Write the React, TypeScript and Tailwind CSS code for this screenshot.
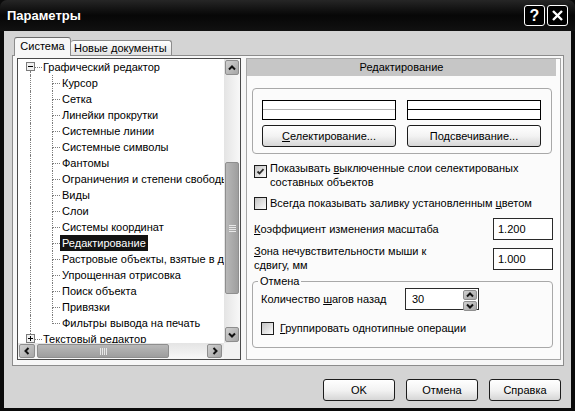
import React from "react";

type Dir = "up" | "down" | "left" | "right";

const chevronPaths: Record<Dir, string> = {
  up: "M1 5.5 L4 2.5 L7 5.5",
  down: "M1 2.5 L4 5.5 L7 2.5",
  left: "M5.5 1 L2.5 4 L5.5 7",
  right: "M2.5 1 L5.5 4 L2.5 7",
};

function Chevron({ dir }: { dir: Dir }) {
  return (
    <svg width="8" height="8" viewBox="0 0 8 8">
      <path d={chevronPaths[dir]} fill="none" stroke="#111" strokeWidth="2" />
    </svg>
  );
}

function ScrollButton({ dir, className }: { dir: Dir; className?: string }) {
  return (
    <div
      className={`flex shrink-0 items-center justify-center rounded-[2px] border border-[#8e8e8e] bg-gradient-to-br from-[#d0d0d0] to-[#a6a6a6] ${className ?? ""}`}
    >
      <Chevron dir={dir} />
    </div>
  );
}

function Grip({ vertical }: { vertical?: boolean }) {
  return vertical ? (
    <svg width="7" height="8" viewBox="0 0 7 8">
      <path d="M0 1.5h7M0 3.5h7M0 5.5h7M0 7.5h7" stroke="#e8e8e8" strokeWidth="1" />
    </svg>
  ) : (
    <svg width="8" height="7" viewBox="0 0 8 7">
      <path d="M1.5 0v7M3.5 0v7M5.5 0v7M7.5 0v7" stroke="#e8e8e8" strokeWidth="1" />
    </svg>
  );
}

function ExpandBox({ open }: { open: boolean }) {
  return (
    <svg width="9" height="9" viewBox="0 0 9 9" className="shrink-0">
      <rect x="0.5" y="0.5" width="8" height="8" fill="#f0f0f0" stroke="#7c7c7c" />
      <path d="M2 4.5h5" stroke="#000" />
      {!open && <path d="M4.5 2v5" stroke="#000" />}
    </svg>
  );
}

function Check({ checked }: { checked?: boolean }) {
  return (
    <span className="flex h-[13px] w-[13px] shrink-0 items-center justify-center border border-[#1c1c1c] bg-gradient-to-br from-[#c4c4c4] to-[#fbfbfb]">
      {checked && (
        <svg width="9" height="9" viewBox="0 0 9 9">
          <path d="M1.5 4.5 L3.5 6.5 L7.5 2.2" fill="none" stroke="#2a2a2a" strokeWidth="1.8" />
        </svg>
      )}
    </span>
  );
}

function Btn({ children, className }: { children: React.ReactNode; className?: string }) {
  return (
    <div
      className={`flex items-center justify-center rounded-[3px] border border-[#1c1c1c] bg-gradient-to-b from-white via-[#f3f3f3] to-[#d6d6d6] ${className ?? ""}`}
    >
      {children}
    </div>
  );
}

function ColorField({ dark }: { dark?: boolean }) {
  return (
    <div className="flex h-[20px] w-[134px] flex-col border border-black bg-white">
      <div className={dark ? "h-[9px] border-b border-black" : "h-[9px] border-b border-[#b4b4b4]"} />
    </div>
  );
}

function TitleButton({ children }: { children: React.ReactNode }) {
  return (
    <div className="flex h-[21px] w-[21px] items-center justify-center rounded-[3px] border border-white bg-black text-white">
      {children}
    </div>
  );
}

const children = [
  "Курсор",
  "Сетка",
  "Линейки прокрутки",
  "Системные линии",
  "Системные символы",
  "Фантомы",
  "Ограничения и степени свободы",
  "Виды",
  "Слои",
  "Системы координат",
  "Редактирование",
  "Растровые объекты, взятые в документ",
  "Упрощенная отрисовка",
  "Поиск объекта",
  "Привязки",
  "Фильтры вывода на печать",
];

function ChildRow({ label, last, selected }: { label: string; last: boolean; selected: boolean }) {
  return (
    <div className="flex h-[16px] shrink-0">
      <div className="w-[12px] shrink-0" />
      <div className="w-[22px] shrink-0 border-l border-dotted border-[#7c7c7c]" />
      <div className="flex w-[8px] shrink-0 flex-col">
        <div className="h-[9px] border-b border-l border-dotted border-[#7c7c7c]" />
        {!last && <div className="flex-1 border-l border-dotted border-[#7c7c7c]" />}
      </div>
      <span
        className={
          selected
            ? "whitespace-nowrap bg-[#131313] px-[2px] leading-[16px] text-white"
            : "whitespace-nowrap px-[2px] leading-[16px]"
        }
      >
        {label}
      </span>
    </div>
  );
}

function RootRow({ label, open, last }: { label: string; open: boolean; last: boolean }) {
  return (
    <div className="flex h-[16px] shrink-0">
      <div className="w-[8px] shrink-0" />
      <div className="flex w-[9px] shrink-0 flex-col items-center">
        <div className={last ? "h-[3px] border-l border-dotted border-[#7c7c7c]" : "h-[3px]"} />
        <ExpandBox open={open} />
        {!last && <div className="flex-1 border-l border-dotted border-[#7c7c7c]" />}
      </div>
      <div className="h-0 w-[7px] shrink-0 self-center border-t border-dotted border-[#7c7c7c]" />
      <span className="whitespace-nowrap px-[1px] leading-[16px]">{label}</span>
    </div>
  );
}

function Tree() {
  return (
    <div className="flex h-[302px] w-[224px] shrink-0 flex-col border border-[#4a4a4a] bg-white">
      <div className="flex h-[284px]">
        <div className="flex flex-1 flex-col overflow-hidden">
          <RootRow label="Графический редактор" open last={false} />
          {children.map((c, i) => (
            <ChildRow key={c} label={c} last={i === children.length - 1} selected={c === "Редактирование"} />
          ))}
          <RootRow label="Текстовый редактор" open={false} last />
        </div>
        {/* vertical scrollbar */}
        <div className="flex w-[16px] flex-col bg-gradient-to-r from-[#e4e4e4] to-[#f8f8f8] px-[1px]">
          <ScrollButton dir="up" className="mt-[1px] h-[15px]" />
          <div className="h-[87px]" />
          <div className="flex h-[132px] items-center justify-center rounded-[2px] border border-[#8e8e8e] bg-gradient-to-r from-[#b8b8b8] to-[#9e9e9e]">
            <Grip vertical />
          </div>
          <div className="flex-1" />
          <ScrollButton dir="down" className="mb-[1px] h-[15px]" />
        </div>
      </div>
      <div className="flex h-[16px]">
        <div className="flex flex-1 items-stretch bg-gradient-to-b from-[#e4e4e4] to-[#f8f8f8] py-[1px]">
          <ScrollButton dir="left" className="ml-[1px] w-[16px]" />
          <div className="ml-[2px] flex w-[132px] items-center justify-center rounded-[2px] border border-[#8e8e8e] bg-gradient-to-b from-[#b8b8b8] to-[#9e9e9e]">
            <Grip />
          </div>
          <div className="flex-1" />
          <ScrollButton dir="right" className="mr-[2px] w-[15px]" />
        </div>
        <div className="w-[16px] bg-[#f2f2f2]" />
      </div>
    </div>
  );
}

function RightPane() {
  return (
    <div className="ml-[5px] flex h-[302px] w-[315px] shrink-0 flex-col border border-[#a6a6a6] bg-[#fbfbfb]">
      <div className="mr-[4px] flex h-[17px] items-center justify-center bg-[#c6c6c6]">Редактирование</div>

      <div className="ml-[5px] mt-[12px] h-[66px] w-[300px] rounded-[4px] border border-[#a8a8a8] pl-[9px] pt-[11px]">
        <div className="flex gap-[11px]">
          <ColorField />
          <ColorField dark />
        </div>
        <div className="mt-[5px] flex gap-[11px]">
          <Btn className="h-[22px] w-[134px]">
            <span>
              <span className="underline">С</span>електирование...
            </span>
          </Btn>
          <Btn className="h-[22px] w-[134px]">Подсвечивание...</Btn>
        </div>
      </div>

      <div className="ml-[7px] mt-[7px] flex items-start gap-[3px]">
        <div className="mt-[4px]">
          <Check checked />
        </div>
        <span className="leading-[14px]">
          Показывать <span className="underline">в</span>ыключенные слои селектированых
          <br />
          составных объектов
        </span>
      </div>

      <div className="ml-[7px] mt-[7px] flex h-[14px] items-center gap-[3px]">
        <Check />
        <span>
          Всегда показывать заливку установленным <span className="underline">ц</span>ветом
        </span>
      </div>

      <div className="ml-[7px] mr-[7px] mt-[8px] flex h-[22px] items-center justify-between">
        <span>
          <span className="underline">К</span>оэффициент изменения масштаба
        </span>
        <div className="flex h-[22px] w-[60px] items-center border border-[#2a2a2a] bg-white pl-[4px]">1.200</div>
      </div>

      <div className="ml-[7px] mr-[7px] mt-[4px] flex items-start justify-between">
        <span className="leading-[14px]">
          <span className="underline">З</span>она нечувствительности мыши к
          <br />
          сдвигу, мм
        </span>
        <div className="mt-[4px] flex h-[22px] w-[60px] items-center border border-[#2a2a2a] bg-white pl-[4px]">
          1.000
        </div>
      </div>

      <div className="ml-[5px] mt-[9px] flex h-[67px] w-[301px] flex-col rounded-[4px] border border-[#a8a8a8]">
        <span className="-mt-[7px] ml-[5px] w-fit bg-[#fbfbfb] px-[2px] leading-[13px]">Отмена</span>
        <div className="flex h-[22px] items-center pl-[8px]">
          <span className="w-[144px]">
            Количество <span className="underline">ш</span>агов назад
          </span>
          <div className="flex h-[22px] w-[74px] border border-[#2a2a2a] bg-white">
            <div className="flex flex-1 items-center pl-[6px]">30</div>
            <div className="flex w-[16px] flex-col gap-[1px] p-[1px]">
              <ScrollButton dir="up" className="flex-1" />
              <ScrollButton dir="down" className="flex-1" />
            </div>
          </div>
        </div>
        <div className="mt-[11px] flex h-[14px] items-center gap-[6px] pl-[8px]">
          <Check />
          <span>
            <span className="underline">Г</span>руппировать однотипные операции
          </span>
        </div>
      </div>
    </div>
  );
}

export default function App() {
  return (
    <div className="flex h-[411px] w-[575px] flex-col overflow-hidden bg-[#0a0a0a] font-['Liberation_Sans',Arial,sans-serif] text-[11px] text-black">
      {/* Title bar */}
      <div className="flex h-[31px] shrink-0 items-center justify-between rounded-t-[7px] bg-gradient-to-b from-[#262626] via-[#070707] to-[#111] pl-[7px] pr-[7px]">
        <span className="text-[13px] font-bold leading-none text-white">Параметры</span>
        <div className="flex gap-[2px]">
          <TitleButton>
            <span className="text-[16px] font-bold leading-none">?</span>
          </TitleButton>
          <TitleButton>
            <svg width="13" height="13" viewBox="0 0 13 13">
              <path d="M2 2 L11 11 M11 2 L2 11" stroke="#fff" strokeWidth="2.4" />
            </svg>
          </TitleButton>
        </div>
      </div>

      {/* Dialog body */}
      <div className="mx-[4px] mb-[3px] flex flex-1 flex-col bg-[#d4d4d4]">
        {/* Tabs */}
        <div className="flex h-[24px] items-end pl-[10px]">
          <div className="relative z-10 -mb-px flex h-[19px] w-[57px] items-center justify-center rounded-t-[3px] border border-b-0 border-[#8c8c8c] border-t-[#6a6a6a] bg-[#f7f7f7] pb-[1px]">
            Система
          </div>
          <div className="flex h-[15px] items-center rounded-t-[3px] border border-b-0 border-l-0 border-[#8c8c8c] bg-gradient-to-b from-white to-[#e2e2e2] pl-[3px] pr-[4px] pt-[1px]">
            Новые документы
          </div>
        </div>

        {/* Tab page */}
        <div className="ml-[8px] flex h-[311px] w-[552px] border border-[#8c8c8c] bg-[#f7f7f7] pl-[4px] pt-[2px]">
          <Tree />
          <RightPane />
        </div>

        {/* Dialog buttons */}
        <div className="mt-[13px] flex justify-end gap-[11px] pr-[10px]">
          <Btn className="h-[22px] w-[72px]">OK</Btn>
          <Btn className="h-[22px] w-[72px]">Отмена</Btn>
          <Btn className="h-[22px] w-[72px]">Справка</Btn>
        </div>
      </div>
    </div>
  );
}
